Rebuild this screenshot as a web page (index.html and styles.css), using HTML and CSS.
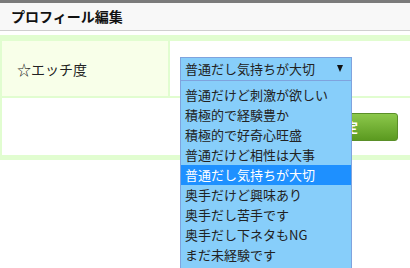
FILE: index.html
```html
<!DOCTYPE html>
<html lang="ja">
<head>
<meta charset="utf-8">
<link rel="stylesheet" href="styles.css">
</head>
<body>
<div class="page">
<div class="header">プロフィール編集</div>
<div class="panel">
  <div class="row">
    <div class="label">☆エッチ度</div>
    <div class="field">
      <div class="select">
        <span class="value">普通だし気持ちが大切</span>
        <span class="arrow"></span>
        <ul class="list">
          <li>普通だけど刺激が欲しい</li>
          <li>積極的で経験豊か</li>
          <li>積極的で好奇心旺盛</li>
          <li>普通だけど相性は大事</li>
          <li class="active">普通だし気持ちが大切</li>
          <li>奥手だけど興味あり</li>
          <li>奥手だし苦手です</li>
          <li>奥手だし下ネタもNG</li>
          <li>まだ未経験です</li>
        </ul>
      </div>
    </div>
  </div>
  <div class="actions">
    <button class="btn">設定</button>
  </div>
</div>
</div>
</body>
</html>
```

FILE: styles.css
```css
html, body {
  margin: 0;
  padding: 0;
  background: #ffffff;
  font-family: "Noto Sans CJK JP", "Noto Sans", sans-serif;
  color: #222;
}

.page {
  min-height: 268px;
  overflow: hidden;
}

.header {
  border-top: 3px solid #7b7b7b;
  border-bottom: 1px solid #cfcfcf;
  background: #f8f8f8;
  height: 27px;
  line-height: 27px;
  padding-left: 11px;
  font-size: 14px;
  font-weight: bold;
  color: #111;
}

.panel {
  margin-top: 4px;
  background: #e1fdd0;
  padding: 6px 0 5px 2px;
  display: flex;
  flex-direction: column;
  gap: 2px;
}

.row {
  display: grid;
  grid-template-columns: 166px 1fr;
  column-gap: 2px;
  height: 55px;
}

.label {
  background: #f8ffe9;
  display: flex;
  align-items: center;
  padding-left: 15px;
  font-size: 14px;
  color: #222;
}

.field {
  background: #ffffff;
  display: flex;
  align-items: center;
  padding-left: 10px;
}

.select {
  position: relative;
  height: 22px;
  border: 1px solid #7fa3de;
  background: #87cefa;
  display: flex;
  align-items: center;
  justify-content: space-between;
  padding: 0 8px 0 4px;
  box-sizing: content-box;
  width: 158px;
  font-size: 13px;
}

.value {
  white-space: nowrap;
  line-height: 22px;
}

.arrow {
  width: 0;
  height: 0;
  border-left: 3.5px solid transparent;
  border-right: 3.5px solid transparent;
  border-top: 7px solid #111;
}

.list {
  position: absolute;
  top: 23px;
  left: -1px;
  width: 170px;
  margin: 0;
  padding: 4px 0 20px 0;
  list-style: none;
  background: #87cefa;
  border: 1px solid #7fa3de;
  border-top: none;
  z-index: 5;
}

.list li {
  height: 20px;
  line-height: 20px;
  padding-left: 4px;
  font-size: 13px;
  white-space: nowrap;
  color: #222;
}

.list li.active {
  background: #1e90ff;
  color: #ffffff;
}

.actions {
  background: #ffffff;
  height: 57px;
  display: flex;
  align-items: center;
  justify-content: flex-end;
  padding-right: 12px;
}

.btn {
  width: 106px;
  height: 28px;
  border: 1px solid #5a8f28;
  border-radius: 3px;
  background: linear-gradient(#8cc84b, #5b9a20);
  color: #ffffff;
  font-family: "Noto Sans CJK JP", sans-serif;
  font-size: 13px;
  font-weight: bold;
  padding: 0;
}
```
